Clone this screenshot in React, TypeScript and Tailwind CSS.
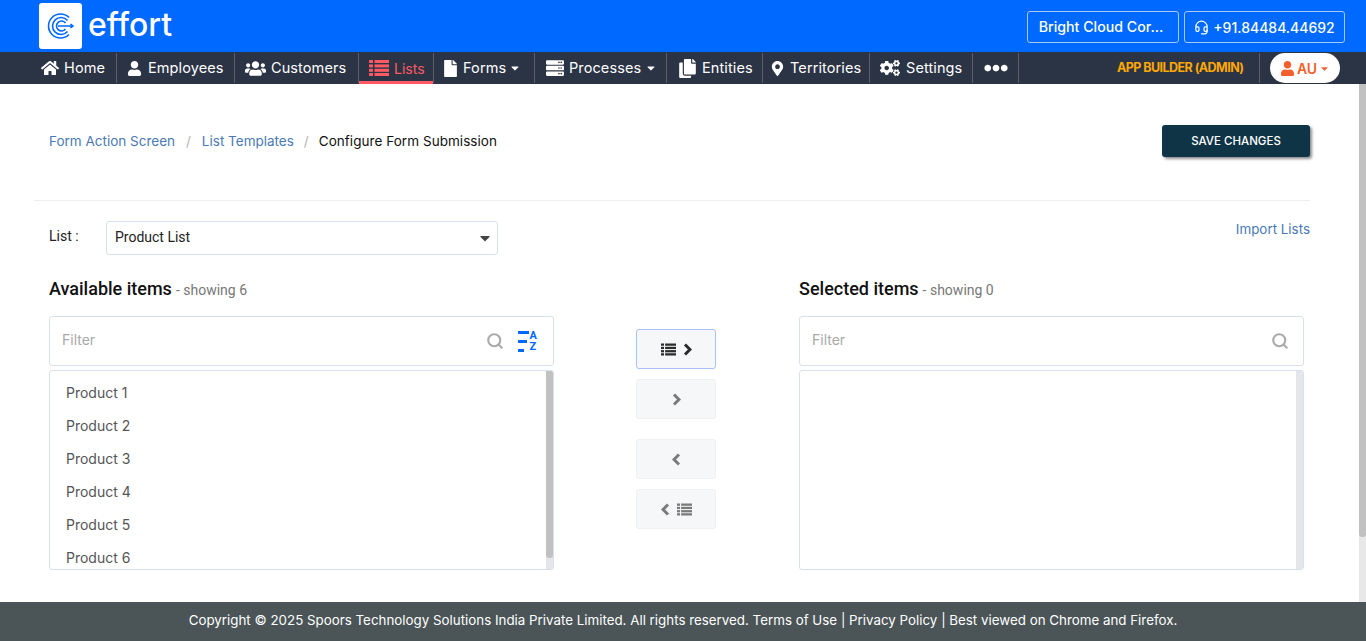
import React from 'react';
import {
  FaHome,
  FaUser,
  FaUsers,
  FaFile,
  FaServer,
  FaCopy,
  FaMapMarkerAlt,
  FaCogs,
  FaEllipsisH,
  FaCaretDown,
} from 'react-icons/fa';
import { Search, Headset } from 'lucide-react';

const poppins = "font-['Inter','Liberation_Sans',sans-serif]";
const roboto = "font-['Roboto','Liberation_Sans',sans-serif]";

const Logo = () => (
  <div className="w-[43px] h-[46px] bg-white rounded-[3px] flex items-center justify-center">
    <svg width="28" height="28" viewBox="0 0 28 28" fill="none" stroke="#0069ff" strokeWidth="1.6">
      <path d="M22 5.5 A12 12 0 1 0 22 22.5" />
      <path d="M20.5 8.5 A8.5 8.5 0 1 0 20.5 19.5" />
      <path d="M18.5 11 A5 5 0 1 0 18.5 17" />
      <path d="M11 14 H26 M23.5 12 L26 14 L23.5 16" />
    </svg>
  </div>
);

const ListIcon = ({ width, height }: { width: number; height: number }) => (
  <svg width={width} height={height} viewBox="0 0 20 16" fill="currentColor" className="shrink-0">
    <rect x="0" y="0" width="4" height="3" />
    <rect x="5.5" y="0" width="14.5" height="3" />
    <rect x="0" y="4.4" width="4" height="3" />
    <rect x="5.5" y="4.4" width="14.5" height="3" />
    <rect x="0" y="8.8" width="4" height="3" />
    <rect x="5.5" y="8.8" width="14.5" height="3" />
    <rect x="0" y="13" width="4" height="3" />
    <rect x="5.5" y="13" width="14.5" height="3" />
  </svg>
);

const Chevron = ({ left }: { left?: boolean }) => (
  <svg width="9" height="13" viewBox="0 0 9 13" fill="none" stroke="currentColor" strokeWidth="3" className="shrink-0">
    <path d={left ? 'M7 1.5 L2 6.5 L7 11.5' : 'M2 1.5 L7 6.5 L2 11.5'} />
  </svg>
);

const Divider = () => <div className="w-px h-[30px] bg-[#5b5f66] shrink-0" />;

const NavItem = ({
  icon,
  label,
  className,
  caret,
}: {
  icon: React.ReactNode;
  label: string;
  className: string;
  caret?: boolean;
}) => (
  <>
    <div className={`flex items-center h-full shrink-0 text-white ${className}`}>
      {icon}
      <span className="text-[14.5px] tracking-[0.1px] whitespace-nowrap">{label}</span>
      {caret && <FaCaretDown size={12} className="-ml-[1px]" />}
    </div>
    <Divider />
  </>
);

const FilterBox = ({ sort }: { sort?: boolean }) => (
  <div className={`h-[50px] border border-[#d8e0ec] rounded-[3px] flex items-center pl-3 bg-white ${sort ? 'pr-[16px]' : 'pr-[14px]'}`}>
    <span className={`flex-1 pb-[3px] text-[14px] text-[#a9a9a9] ${poppins}`}>Filter</span>
    <Search size={18} strokeWidth={2.8} className={`text-[#aaaaaa] ${sort ? 'mr-[14px]' : ''}`} />
    {sort && (
      <div className="flex items-center gap-[1px] text-[#0069ff]">
        <svg width="11" height="21" viewBox="0 0 11 21" fill="#0069ff">
          <rect x="0" y="0" width="11" height="3" />
          <rect x="0" y="9" width="9" height="3" />
          <rect x="0" y="18" width="6" height="3" />
        </svg>
        <div className={`flex flex-col text-[11px] font-bold leading-[11px] ${roboto}`}>
          <span>A</span>
          <span>Z</span>
        </div>
      </div>
    )}
  </div>
);

const MoveButton = ({ active, className, children }: { active?: boolean; className?: string; children: React.ReactNode }) => (
  <div
    className={`w-[80px] h-[40px] rounded-[3px] border flex items-center justify-center gap-[7px] bg-[#f6f7f9] ${
      active ? 'border-[#a9c2f7] text-[#2b2b2b]' : 'border-[#eff0f2] text-[#7a7a7a]'
    } ${className ?? ''}`}
  >
    {children}
  </div>
);

const products = ['Product 1', 'Product 2', 'Product 3', 'Product 4', 'Product 5', 'Product 6'];

export default function App() {
  return (
    <div className={`h-[641px] w-[1366px] flex flex-col overflow-hidden bg-white ${poppins}`}>
      {/* Top bar */}
      <header className="h-[52px] bg-[#0069ff] flex items-start pl-[39px] pr-[21px] shrink-0">
        <div className="mt-[3px]">
          <Logo />
        </div>
        <span className={`ml-[6px] mt-[3px] text-white text-[32px] leading-[44px] font-medium ${poppins}`}>effort</span>
        <div className="ml-auto mt-[11px] flex gap-[5px] text-white font-medium">
          <div className="w-[152px] h-[32px] border border-[#a8c8fb] rounded-[3px] flex items-center justify-center pr-[4px] text-[14.2px]">
            Bright Cloud Cor...
          </div>
          <div className="w-[161px] h-[32px] border border-[#a8c8fb] rounded-[3px] flex items-center justify-center gap-[4px] text-[14px]">
            <Headset size={15} strokeWidth={2} />
            +91.84484.44692
          </div>
        </div>
      </header>

      {/* Nav bar */}
      <nav className="h-[32px] bg-[#2b3445] flex items-center pl-[31px] pr-[26px] shrink-0">
        <NavItem className="w-[85px] pl-[10px] gap-[5px]" label="Home" icon={<FaHome size={18} />} />
        <NavItem className="w-[117px] pl-[10px] gap-[6px]" label="Employees" icon={<FaUser size={15} />} />
        <NavItem className="w-[123px] pl-[10px] gap-[5px]" label="Customers" icon={<FaUsers size={21} />} />
        <div className="relative flex items-center h-full w-[74px] pl-[10px] gap-[5px] text-[#ff5a63] shrink-0">
          <ListIcon width={20} height={16} />
          <span className="text-[14px]">Lists</span>
          <div className="absolute left-0 right-0 bottom-0 h-[3px] bg-[#ff5a63]" />
        </div>
        <Divider />
        <NavItem className="w-[100px] pl-[8px] gap-[4px]" label="Forms" icon={<FaFile size={17} />} caret />
        <NavItem className="w-[131px] pl-[11px] gap-[5px]" label="Processes" icon={<FaServer size={18} />} caret />
        <NavItem className="w-[95px] pl-[11px] gap-[5px]" label="Entities" icon={<FaCopy size={19} />} />
        <NavItem className="w-[106px] pl-[7px] gap-[5px]" label="Territories" icon={<FaMapMarkerAlt size={15} />} />
        <NavItem className="w-[102px] pl-[10px] gap-[6px]" label="Settings" icon={<FaCogs size={20} />} />
        <NavItem className="w-[45px] pl-[11px]" label="" icon={<FaEllipsisH size={24} />} />
        <span className="ml-[98px] text-[12.5px] tracking-[-0.55px] font-bold text-[#ffa800] whitespace-nowrap w-[126px]">APP BUILDER (ADMIN)</span>
        <div className="ml-[16px]">
          <Divider />
        </div>
        <div className="ml-[10px] w-[70px] h-[30px] bg-white rounded-full flex items-center justify-center gap-[2px] text-[#f4602d] text-[14px] font-semibold">
          <FaUser size={15} />
          AU
          <FaCaretDown size={11} />
        </div>
      </nav>

      {/* Body */}
      <div className="flex flex-1 min-h-0">
        <main className="flex-1 pl-[34px] pr-[49px] min-w-0">
          <div className="flex items-center justify-between pl-[15px] pt-[41px] mb-[43px]">
            <div className="flex items-center text-[13.5px]">
              <span className="text-[#4a7ab5]">Form Action Screen</span>
              <span className="text-[#b5b5b5] mx-[11px]">/</span>
              <span className="text-[#4a7ab5]">List Templates</span>
              <span className="text-[#b5b5b5] mx-[10px]">/</span>
              <span className="text-[#111111] tracking-[0.05px]">Configure Form Submission</span>
            </div>
            <button className="w-[148px] h-[32px] pt-[1px] bg-[#0f3446] text-white text-[11.5px] font-medium rounded-[3px] shadow-[2px_2px_3px_rgba(0,0,0,0.45)]">
              SAVE CHANGES
            </button>
          </div>
          <div className="h-px bg-[#eceef0]" />

          <div className="flex items-start pl-[15px] mt-[20px] h-[34px]">
            <span className={`w-[57px] mt-[5px] text-[14px] text-[#222222] ${roboto}`}>List :</span>
            <div className={`w-[392px] h-[34px] border border-[#d8e0ec] rounded-[3px] flex items-center pl-2 pr-[4px] text-[14px] text-[#222222] ${roboto}`}>
              <span className="flex-1 pb-[2px]">Product List</span>
              <FaCaretDown size={16} className="text-[#444444]" />
            </div>
            <span className="ml-auto mt-[-2px] text-[13.4px] text-[#4a7ab5]">Import Lists</span>
          </div>

          <div className="grid grid-cols-[505px_245px_505px] pl-[15px] mt-[20px]">
            {/* Available */}
            <div>
              <div className={`h-[24px] flex items-baseline gap-[4px] ${roboto}`}>
                <span className="text-[18px] font-medium text-[#111111]">Available items</span>
                <span className="text-[14px] text-[#777777]">- showing 6</span>
              </div>
              <div className="mt-[17px]">
                <FilterBox sort />
              </div>
              <div className="mt-[4px] h-[200px] border border-[#d8e0ec] rounded-[3px] flex overflow-hidden">
                <div className="flex-1 pl-[16px] pt-[5px] text-[14px] text-[#555555] overflow-hidden">
                  {products.map((p) => (
                    <div key={p} className="h-[33px] leading-[33px]">
                      {p}
                    </div>
                  ))}
                </div>
                <div className="w-[7px] bg-[#e4e6e9]">
                  <div className="h-[187px] bg-[#c1c1c1] rounded-b-[3px]" />
                </div>
              </div>
            </div>

            {/* Move buttons */}
            <div className="flex flex-col items-center pt-[54px] pr-[1px]">
              <MoveButton active>
                <ListIcon width={15} height={13} />
                <Chevron />
              </MoveButton>
              <MoveButton className="mt-[10px]">
                <Chevron />
              </MoveButton>
              <MoveButton className="mt-[20px]">
                <Chevron left />
              </MoveButton>
              <MoveButton className="mt-[10px]">
                <Chevron left />
                <ListIcon width={15} height={13} />
              </MoveButton>
            </div>

            {/* Selected */}
            <div>
              <div className={`h-[24px] flex items-baseline gap-[4px] ${roboto}`}>
                <span className="text-[18px] font-medium text-[#111111]">Selected items</span>
                <span className="text-[14px] text-[#777777]">- showing 0</span>
              </div>
              <div className="mt-[17px]">
                <FilterBox />
              </div>
              <div className="mt-[4px] h-[200px] border border-[#d8e0ec] rounded-[3px] flex justify-end overflow-hidden">
                <div className="w-[7px] bg-[#e4e6e9]" />
              </div>
            </div>
          </div>
        </main>

        {/* Page scrollbar */}
        <div className="w-[7px] bg-[#e8e8e8] shrink-0">
          <div className="h-[453px] bg-[#c1c1c1] rounded-b-[3px]" />
        </div>
      </div>

      {/* Footer */}
      <footer className="h-[39px] pb-[2px] bg-[#4b5557] text-white text-[13.35px] flex items-center justify-center shrink-0">
        Copyright © 2025 Spoors Technology Solutions India Private Limited. All rights reserved. Terms of Use | Privacy Policy | Best viewed on Chrome and Firefox.
      </footer>
    </div>
  );
}
